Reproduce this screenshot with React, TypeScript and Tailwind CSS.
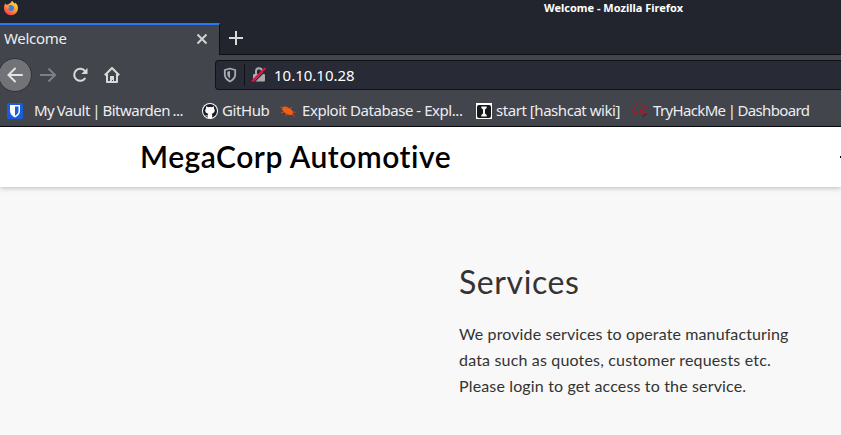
import React from "react";

function FirefoxLogo() {
  return (
    <svg width="16" height="16" viewBox="0 0 16 16">
      <defs>
        <linearGradient id="fx" x1="0.8" y1="0" x2="0.2" y2="1">
          <stop offset="0" stopColor="#ffe14a" />
          <stop offset="0.5" stopColor="#ff9a2e" />
          <stop offset="1" stopColor="#f5304f" />
        </linearGradient>
      </defs>
      <path d="M2.2 3.4l1 1.2 1.6.1C6 3.300 8 3 8.200 2.200L8.900.9c1.300.6 2 1.700 2.300 2.700l1.300-.5c1.600 1.300 2.500 3.200 2.500 5.100A7 7 0 0 1 1 8.300C1 6.300 1.500 4.900 2.200 3.400z" fill="url(#fx)" />
      <path d="M6 5.500l1.600-.4 2 .4 1.500 1.700-.2 2.300-1.800 1.500-2.500-.3-1.700-1.900 2.300-.8-1.700-1.100z" fill="#3f7be0" />
    </svg>
  );
}

function Bookmark({ width, gap, icon, label, spacing }: { width: string; gap: string; icon: React.ReactNode; label: string; spacing: string }) {
  return (
    <div className={`flex h-full shrink-0 items-center ${width} ${gap}`}>
      {icon}
      <span className={`whitespace-nowrap pb-[2px] ${spacing}`}>{label}</span>
    </div>
  );
}

const bitwarden = (
  <svg className="shrink-0" width="16" height="16" viewBox="0 0 16 16">
    <rect width="16" height="16" rx="1.5" fill="#175ddc" />
    <path d="M3 2h10v6c0 3-2 5-5 6.500C5 13 3 11 3 8z" fill="#fff" />
    <path d="M8 3.500h3.500V8c0 2-1.300 3.500-3.500 4.700z" fill="#175ddc" />
  </svg>
);
const github = (
  <svg className="shrink-0" width="16" height="16" viewBox="0 0 16 16">
    <circle cx="8" cy="8" r="8" fill="#fff" />
    <circle cx="8" cy="8" r="7" fill="#1c1d21" />
    <path d="M4.200 3.200l2 1c1.200-.3 2.400-.3 3.600 0l2-1c.3.800.3 1.500.1 2.100 1.800 2.300.6 5-2.300 5.400.5.500.6 1 .6 1.600v3H5.800v-2c-1.600.3-2.200-.5-2.700-1.500.8.100 1 .9 2.700.7 0-.7.200-1.300.6-1.700C3.500 10.400 2.300 7.600 4.100 5.300c-.2-.7-.2-1.400.1-2.100z" fill="#fff" />
  </svg>
);
const exploit = (
  <svg className="shrink-0" width="16" height="16" viewBox="0 0 16 16">
    <path d="M2.500 4.500c1.500-1.800 4-1.200 6 .3l2.900 2c1.900 1.300 2.300 4.200.3 4.900-2.200.7-4.800-.1-6.700-1.900C3 8.200 1.200 6.300 2.500 4.500z" fill="#f15f16" />
    <path d="M3 5L.5 4M4 9l-3 .8M7 11l-1.500 2M10 6l2-2M12 9l3.500.3M12 11l2.500 2.500" stroke="#c7511f" strokeWidth="1" fill="none" />
  </svg>
);
const hashcat = (
  <svg className="shrink-0" width="16" height="16" viewBox="0 0 16 16">
    <rect width="16" height="16" fill="#fff" />
    <rect x="1" y="2" width="14" height="13" rx="2" fill="#161819" />
    <path d="M5.300 3.500h5.400V5L9 6.500v4l1.700 1.500v1.500H5.300V12L7 10.500v-4L5.300 5z" fill="#f6f6f6" />
  </svg>
);
const tryhackme = (
  <svg className="shrink-0" width="16" height="16" viewBox="0 0 16 16" fill="none" stroke="#bd1320" strokeWidth="1">
    <path d="M5.500 9.500H3C.1 9.500-.1 5.600 3 5 3.200 2 5 .5 7.300.5c2 0 3.600 1.300 4 3 2.500-.3 4 1.500 3.500 3.500" />
    <path d="M7.500 7.500H11M9 9.500h5.500" stroke="#a5192a" />
    <path d="M8.500 11.500h2M9 14.500h2.500M13 14.500h2.500" stroke="#8d2732" />
    <path d="M12 11.500h3M10 13h3" stroke="#2b2f38" />
  </svg>
);

export default function App() {
  return (
    <div className="flex h-[435px] w-[841px] flex-col overflow-hidden bg-[#f8f8f8] font-['Noto_Sans',sans-serif] text-[#ededf0]">
      <header className="h-[23px] shrink-0 bg-[#23252e]">
        <div className="flex h-4 items-center">
          <div className="ml-[3px] w-[541px]"><FirefoxLogo /></div>
          <h1 className="whitespace-nowrap text-[11px] font-bold leading-4 text-white">Welcome - Mozilla Firefox</h1>
        </div>
      </header>

      <div className="flex h-8 shrink-0 bg-[#23252e]">
        <div className="flex w-[220px] items-center border-r border-t-2 border-r-[#101116] border-t-[#2878f5] bg-[#42454c] pb-[2px] pl-1">
          <span className="w-[192px] pb-[2px] text-[15px] leading-5 tracking-[-0.3px]">Welcome</span>
          <svg width="12" height="12" viewBox="0 0 12 12" stroke="#d3d3d1" strokeWidth="2"><path d="M1.500 1.500l9 9M10.500 1.500l-9 9" /></svg>
        </div>
        <div className="flex flex-1 items-center border-b border-[#101116] pb-px pl-[9px]">
          <svg width="14" height="14" viewBox="0 0 14 14" stroke="#d9dadb" strokeWidth="2"><path d="M7 0v14M0 7h14" /></svg>
        </div>
      </div>

      <nav className="flex h-[41px] shrink-0 items-center bg-[#42454c] pb-px">
        <div className="-ml-[2px] flex size-[34px] shrink-0 items-center justify-center rounded-full border border-[#303239] bg-[#717376]">
          <svg width="18" height="16" viewBox="0 0 18 16" fill="none" stroke="#e4e4e2" strokeWidth="2"><path d="M9 1.500L2.500 8 9 14.500M2.500 8H16" strokeLinecap="round" /></svg>
        </div>
        <svg className="ml-2 shrink-0" width="16" height="16" viewBox="0 0 16 16" fill="none" stroke="#7d7f82" strokeWidth="2"><path d="M8.500 1.500L15 8l-6.500 6.500M15 8H0" /></svg>
        <svg className="ml-4 shrink-0" width="16" height="16" viewBox="0 0 16 16" fill="none" stroke="#d9dad7" strokeWidth="2"><path d="M13 4.200A6 6 0 1 0 13.300 11" /><path d="M15.500 1v6H9.300z" fill="#d9dad7" stroke="none" /></svg>
        <svg className="ml-4 shrink-0" width="16" height="16" viewBox="0 0 16 16" fill="none" stroke="#d9dad7" strokeWidth="2"><path d="M.8 8.200L8 1l7.200 7.200M3 7v8h10V7" strokeLinejoin="round" /><path d="M6 15V9h4v6H9v-2H8v2z" fill="#d9dad7" stroke="none" /></svg>
        <div className="ml-[95px] flex h-[30px] flex-1 items-center rounded-l border border-r-0 border-[#101116] bg-[#282a35] pl-[6px]">
          <svg width="16" height="16" viewBox="0 0 16 16" fill="none" stroke="#aaabad" strokeWidth="1.800"><path d="M8 1.500L13.200 3v4.300c0 3.500-2 5.600-5.200 7.200-3.200-1.600-5.200-3.700-5.200-7.200V3z" strokeLinejoin="round" /><path d="M8 4v7.500C6.300 10.400 5.300 9 5.300 7V4.800z" fill="#aaabad" stroke="none" /></svg>
          <span className="ml-[6px] h-[22px] w-px bg-[#101116]" />
          <svg className="ml-[6px]" width="16" height="16" viewBox="0 0 16 16" fill="none"><path d="M5 7V4.300a3 3 0 0 1 6 0V7" stroke="#aaabad" strokeWidth="2" /><rect x="2" y="7" width="12" height="7.500" rx="1" fill="#aaabad" /><path d="M2.500 15.500L15.500 2.500" stroke="#282a35" strokeWidth="1.500" /><path d="M1 14.500L14.500 1" stroke="#f0083f" strokeWidth="2" /></svg>
          <span className="ml-[7px] text-[15px] leading-5 text-white">10.10.10.28</span>
        </div>
      </nav>

      <div className="flex h-[31px] shrink-0 items-center border-b border-[#08090d] bg-[#42454c] pl-[7px] text-[15px] leading-5">
        <Bookmark width="w-[195px]" gap="gap-[11px]" icon={bitwarden} label="My Vault | Bitwarden ..." spacing="tracking-[-0.5px] [word-spacing:-1px]" />
        <Bookmark width="w-[78px]" gap="gap-1" icon={github} label="GitHub" spacing="tracking-[-0.4px]" />
        <Bookmark width="w-[196px]" gap="gap-[6px]" icon={exploit} label="Exploit Database - Expl..." spacing="tracking-[-0.45px]" />
        <Bookmark width="w-[156px]" gap="gap-1" icon={hashcat} label="start [hashcat wiki]" spacing="tracking-[-0.45px]" />
        <Bookmark width="w-[180px]" gap="gap-[5px]" icon={tryhackme} label="TryHackMe | Dashboard" spacing="tracking-[-0.65px] [word-spacing:-1px]" />
      </div>

      <main className="flex-1 bg-[#f8f8f8] font-['Lato','Noto_Sans',sans-serif]">
        <div className="flex h-[60px] justify-between bg-white pl-[140px] shadow-[0_1px_5px_rgba(0,0,0,0.25)]">
          <h2 className="pt-[9px] text-[30px] font-semibold leading-10 tracking-[0.5px] text-black">MegaCorp Automotive</h2>
          <span className="mt-[29px] h-[2px] w-px bg-black" />
        </div>
        <section className="ml-[459px] pt-[75px] text-[#333]">
          <h3 className="whitespace-nowrap text-[32px] leading-10 tracking-[0.6px]">Services</h3>
          <div className="mt-[19px] whitespace-nowrap text-base leading-[26px]">
            <p className="tracking-[0.12px]">We provide services to operate manufacturing</p>
            <p className="tracking-[0.17px]">data such as quotes, customer requests etc.</p>
            <p className="tracking-[0.15px]">Please login to get access to the service.</p>
          </div>
        </section>
      </main>
    </div>
  );
}
